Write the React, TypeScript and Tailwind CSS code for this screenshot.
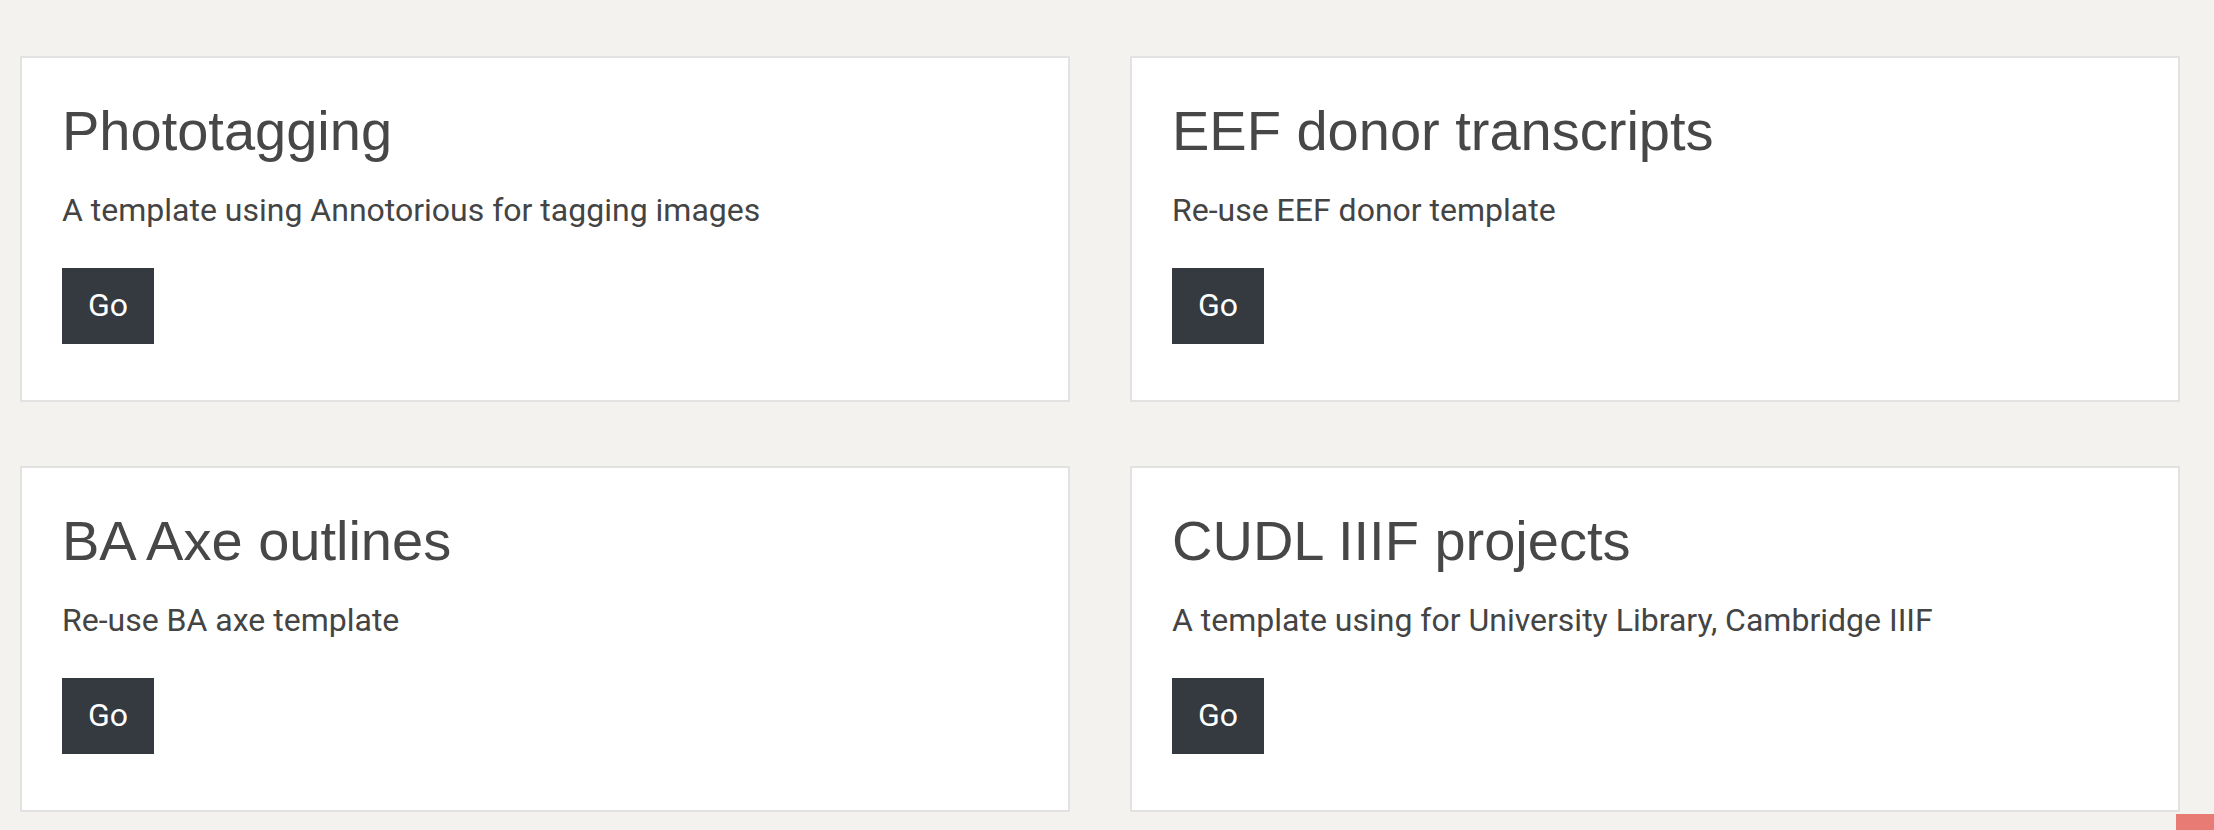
import React from 'react';

interface TemplateCardProps {
  title: string;
  description: string;
}

const templates: TemplateCardProps[] = [
  { title: 'Phototagging', description: 'A template using Annotorious for tagging images' },
  { title: 'EEF donor transcripts', description: 'Re-use EEF donor template' },
  { title: 'BA Axe outlines', description: 'Re-use BA axe template' },
  { title: 'CUDL IIIF projects', description: 'A template using for University Library, Cambridge IIIF' },
];

function TemplateCard({ title, description }: TemplateCardProps) {
  return (
    <div className="bg-white border-2 border-[#e2e2e2] h-[346px] px-[40px] pt-[39px]">
      <h2 className="text-[56px] leading-[1.2] text-[#474747] font-['Liberation_Sans',Arial,sans-serif] font-normal">
        {title}
      </h2>
      <p className="mt-[22px] text-[32px] leading-[48px] text-[#444444] font-['Roboto',sans-serif]">
        {description}
      </p>
      <button className="mt-[34px] h-[76px] w-[92px] pb-[2px] bg-[#343a40] text-white text-[32px] font-['Roboto',sans-serif] flex items-center justify-center">
        Go
      </button>
    </div>
  );
}

export default function App() {
  return (
    <div className="relative w-[2214px] h-[830px] overflow-hidden bg-[#f3f2ef]">
      <div className="grid grid-cols-[1050px_1050px] gap-x-[60px] gap-y-[64px] pl-[20px] pt-[56px]">
        {templates.map((t) => (
          <TemplateCard key={t.title} title={t.title} description={t.description} />
        ))}
      </div>
      {/* chat / feedback widget peeking in at the corner */}
      <div className="absolute right-0 top-[814px] w-[38px] h-[40px] bg-[#e87c74]" />
    </div>
  );
}
